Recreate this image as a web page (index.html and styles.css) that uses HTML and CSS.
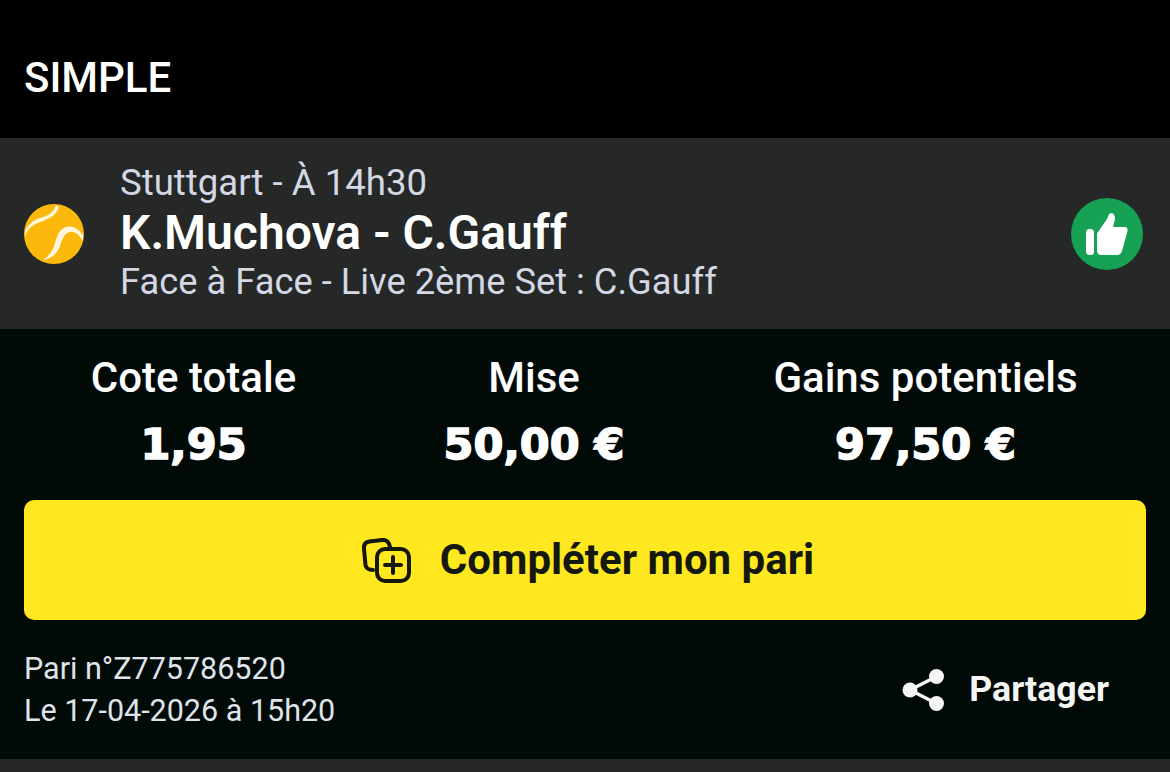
FILE: index.html
```html
<!DOCTYPE html>
<html lang="fr">
<head>
  <meta charset="UTF-8">
  <title>Pari simple</title>
  <link rel="stylesheet" href="styles.css">
</head>
<body>
<header class="top">
  <h1>SIMPLE</h1>
</header>

<section class="event">
  <svg class="ball" viewBox="0 0 60 60">
    <circle cx="30" cy="30" r="30" fill="#fdb90b"/>
    <path d="M1 33C3 24 10 20 19 17C27 14 33 10 35 3L32 1C30 7 26 11 19 13C11 15 4 20 1 27Z" fill="#fff6dc"/>
    <path d="M59 31C54 24 48 21 42 23C36 25 33 31 31 39C29 47 25 52 19 56C27 55 33 50 36 42C39 33 41 29 46 28C51 27 55 31 59 37Z" fill="#fff6dc"/>
  </svg>
  <div class="event-text">
    <div class="event-place">Stuttgart - À 14h30</div>
    <div class="event-name">K.Muchova - C.Gauff</div>
    <div class="event-market">Face à Face - Live 2ème Set : C.Gauff</div>
  </div>
  <svg class="won" viewBox="0 0 72 72">
    <circle cx="36" cy="36" r="36" fill="#16a155"/>
    <rect x="15" y="31" width="8" height="26" rx="3.500" fill="#fff"/>
    <path d="M27 34L36 21C37 19 38 15 40 15C43 15 44 18 44 21L42 29L54 29C56 29 57 31 56.500 33L51 53C50.500 55 49 57 46 57L30 57C28 57 26 55 26 53L26 37C26 36 26 35 27 34Z" fill="#fff"/>
  </svg>
</section>

<main class="summary">
  <div class="stats">
    <div class="stat">
      <div class="stat-label">Cote totale</div>
      <div class="stat-value">1,95</div>
    </div>
    <div class="stat">
      <div class="stat-label">Mise</div>
      <div class="stat-value">50,00 €</div>
    </div>
    <div class="stat">
      <div class="stat-label">Gains potentiels</div>
      <div class="stat-value">97,50 €</div>
    </div>
  </div>

  <button class="complete">
    <svg class="complete-icon" viewBox="0 0 49 45" fill="none" stroke="#14180f" stroke-width="4" stroke-linecap="round" stroke-linejoin="round">
      <path d="M11 32C6 32 4 30 3.500 27L2 11C1.500 6 3.500 4 7.500 3.500L20 2C25 1.500 27 4 28 9"/>
      <rect x="15" y="11" width="32" height="32" rx="8"/>
      <path d="M31 19V35M23 27H39"/>
    </svg>
    <span class="complete-text">Compléter mon pari</span>
  </button>

  <div class="foot">
    <div class="ref">
      <div>Pari n°Z775786520</div>
      <div>Le 17-04-2026 à 15h20</div>
    </div>
    <div class="share">
      <svg class="share-icon" viewBox="0 0 42 42" fill="#f5f6f4">
        <circle cx="34.500" cy="7.500" r="7.500"/>
        <circle cx="8" cy="21" r="7.500"/>
        <circle cx="34.500" cy="34.500" r="7.500"/>
        <path d="M8 21L34.500 7.500M8 21L34.500 34.500" stroke="#f5f6f4" stroke-width="3.500"/>
      </svg>
      <span class="share-text">Partager</span>
    </div>
  </div>
</main>

<div class="next"></div>
</body>
</html>
```

FILE: styles.css
```css
* {
  box-sizing: border-box;
}

html, body {
  width: 100%;
  height: 100%;
  overflow: hidden;
  margin: 0;
  padding: 0;
  background: #000;
  color: #fff;
  font-family: Roboto, "Liberation Sans", sans-serif;
}

body {
  display: flex;
  flex-direction: column;
}

.top {
  height: 138px;
  padding: 18px 24px 0;
  display: flex;
  align-items: center;
  background: #000;
}

.top h1 {
  margin: 0;
  font-size: 42px;
  font-weight: 500;
  line-height: 44px;
}

.event {
  height: 191px;
  padding: 0 27px 2px 24px;
  display: flex;
  align-items: center;
  background: #252826;
}

.ball {
  width: 60px;
  height: 60px;
  flex: none;
  margin-top: 2px;
}

.event-text {
  flex: 1;
  margin-left: 36px;
}

.event-place, .event-market {
  color: #d3d8e4;
  line-height: 40px;
}

.event-place {
  font-size: 36.600px;
}

.event-market {
  font-size: 36.300px;
}

.event-name {
  font-size: 48px;
  font-weight: 600;
  line-height: 60px;
  margin: 0 0 -1px;
}

.won {
  width: 72px;
  height: 72px;
  flex: none;
  margin-top: 2px;
}

.summary {
  height: 430px;
  padding: 0 24px;
  background: #020a07;
}

.stats {
  display: grid;
  grid-template-columns: 339px 342px 1fr;
  padding-top: 26px;
  height: 171px;
  text-align: center;
}

.stat-label {
  font-size: 42px;
  font-weight: 500;
  line-height: 46px;
}

.stat-value {
  margin-top: 18px;
  font-family: "DejaVu Sans", "Liberation Sans", sans-serif;
  font-size: 43px;
  font-weight: 700;
  line-height: 50px;
  -webkit-text-stroke: 1.500px #fff;
}

.complete {
  width: 100%;
  height: 120px;
  padding: 0 0 0 6px;
  border: none;
  border-radius: 10px;
  background: #ffe81f;
  color: #14180f;
  font-family: Roboto, "Liberation Sans", sans-serif;
  font-size: 42px;
  font-weight: 700;
  display: flex;
  align-items: center;
  justify-content: center;
  gap: 29px;
}

.complete-icon {
  width: 49px;
  height: 45px;
}

.complete-text {
  margin-top: -2px;
}

.foot {
  display: flex;
  align-items: center;
  justify-content: space-between;
  padding: 28px 37px 0 0;
}

.ref {
  color: #dfe3ea;
  font-size: 30.500px;
  line-height: 42px;
}

.share {
  display: flex;
  align-items: center;
  gap: 25px;
  color: #f5f6f4;
  font-size: 35.700px;
  font-weight: 700;
}

.share-icon {
  width: 42px;
  height: 42px;
}

.share-text {
  margin-top: -2px;
}

.next {
  flex: 1;
  background: #252826;
}
```
